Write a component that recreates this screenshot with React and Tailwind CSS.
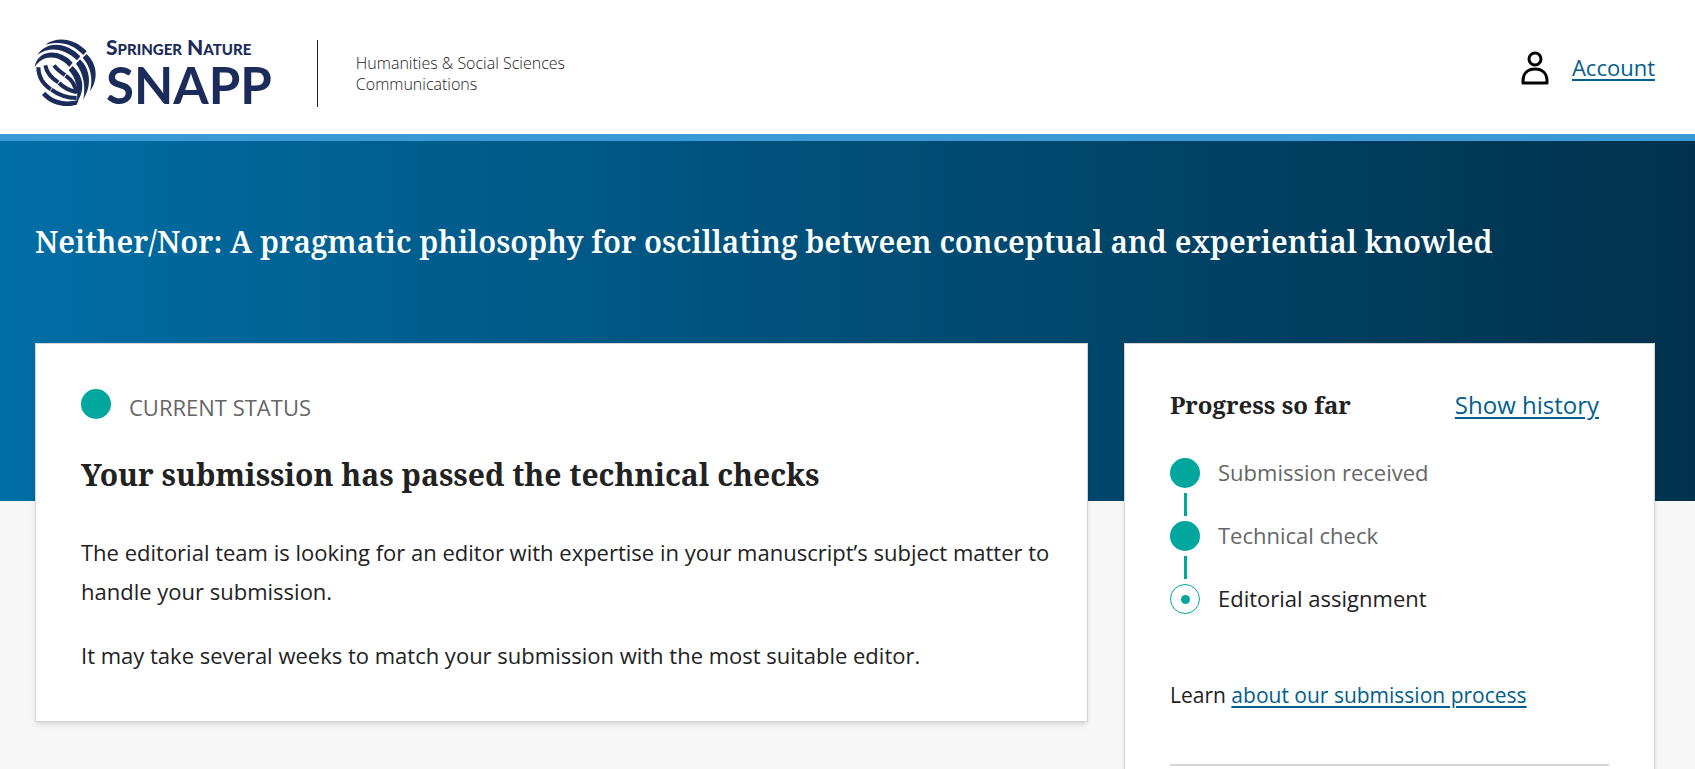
import React from 'react';

const serif = "font-['Noto_Serif','DejaVu_Serif_Condensed',serif]";

const steps = [
  { label: 'Submission received', done: true },
  { label: 'Technical check', done: true },
  { label: 'Editorial assignment', done: false },
];

const Globe = () => (
  <svg viewBox="0 0 216 222" className="h-[74px] w-[72px]" aria-hidden="true">
    <g fill="#1b2c5a">
      {/* upper bands */}
      <path d="M46 26 C84 0 134 8 170 46 L160 57 C128 22 88 14 46 26Z" />
      <path d="M22 56 C54 12 112 20 151 61 L141 73 C108 40 62 28 22 56Z" />
      <path d="M14 94 C22 42 86 34 128 80 L118 93 C86 56 38 54 14 94Z" />
      {/* right bands */}
      <path d="M170 54 C202 84 206 130 180 166 C190 128 182 92 158 65Z" />
      <path d="M150 70 C182 100 186 150 160 190 C168 152 160 112 138 83Z" />
      <path d="M128 90 C160 120 168 160 140 200 C146 160 138 126 116 102Z" />
      {/* outer lower band */}
      <path d="M46 167 C70 194 104 202 146 192 L140 206 C104 217 60 206 36 177Z" />
    </g>
    <g fill="none" stroke="#1b2c5a" strokeWidth="12">
      <path d="M72 88 C82 102 92 108 105 117" />
      <path d="M46 88 C50 112 64 126 85 139" />
      <path d="M25 94 C25 124 38 144 62 160" />
      <path d="M107 119 C126 132 138 150 138 172" />
      <path d="M87 141 C102 156 120 164 140 168" />
      <path d="M64 161 C84 176 108 186 140 186" />
    </g>
  </svg>
);

const Logo = () => (
  <a href="#home" className="flex items-center gap-1 text-[#1b2c5a]">
    <Globe />
    <span className="flex flex-col pt-1 font-['Lato',sans-serif]">
      <span className="text-[21px] leading-5 font-black [font-variant-caps:small-caps]">Springer Nature</span>
      <span className="text-[51px] leading-[56px] font-bold">SNAPP</span>
    </span>
  </a>
);

const Header = () => (
  <header className="flex h-[141px] items-center justify-between border-b-[7px] border-[#3b9ad6] bg-white pr-10 pl-[30px]">
    <div className="flex items-center pt-3">
      <Logo />
      <div className="ml-[45px] flex h-[67px] items-center border-l border-[#222] pt-[2px] pl-[38px]">
        <p className="w-56 text-base leading-[21px] font-light">Humanities &amp; Social Sciences Communications</p>
      </div>
    </div>
    <div className="flex items-center gap-[22px]">
      <svg viewBox="0 0 30 36" className="h-9 w-[30px]" fill="none" stroke="#000" strokeWidth="3" strokeLinejoin="round" aria-hidden="true">
        <circle cx="15" cy="10" r="6" />
        <path d="M3 34 V32 C3 24 8 20 15 20 C22 20 27 24 27 32 V34 Z" />
      </svg>
      <a href="#account" className="text-[22px] text-[#025e8d] underline decoration-2 underline-offset-3">Account</a>
    </div>
  </header>
);

const CurrentStatus = () => (
  <section className="self-start border border-[#d5d5d5] bg-white px-[45px] pt-[45px] pb-[46px] shadow-md">
    <div className="flex gap-[18px]">
      <span className="size-[30px] shrink-0 rounded-full bg-[#01a69c]" />
      <p className="pt-[2px] text-[22px] leading-8 text-[#666]">CURRENT STATUS</p>
    </div>
    <h2 className={`${serif} mt-8 text-[30px] leading-10 font-bold`}>Your submission has passed the technical checks</h2>
    <div className="-mr-3 mt-[38px] text-[22px] leading-[39px]">
      <p>
        The editorial team is looking for an editor with expertise in your manuscript’s subject matter to handle your submission.
      </p>
      <p className="mt-[25px]">It may take several weeks to match your submission with the most suitable editor.</p>
    </div>
  </section>
);

const Progress = () => (
  <section className="border border-[#d5d5d5] bg-white px-[45px] pt-[43px] pb-16 shadow-md">
    <div className="flex items-center justify-between pr-[10px]">
      <h2 className={`${serif} text-2xl leading-9 font-bold`}>Progress so far</h2>
      <a href="#history" className="text-2xl leading-9 text-[#025e8d] underline decoration-2 underline-offset-3">Show history</a>
    </div>
    <ol className="mt-[35px]">
      {steps.map(({ label, done }, i) => (
        <li key={label} className="flex gap-[18px]">
          <div className="flex flex-col items-center">
            {done ? (
              <span className="size-[30px] rounded-full bg-[#01a69c]" />
            ) : (
              <span className="flex size-[30px] items-center justify-center rounded-full border border-[#01a69c]">
                <span className="size-[9px] rounded-full bg-[#01a69c]" />
              </span>
            )}
            {i < steps.length - 1 && <span className="my-[5px] h-[23px] w-[3px] bg-[#01a69c]" />}
          </div>
          <p className={`text-[22px] leading-7 ${done ? 'text-[#666]' : ''}`}>{label}</p>
        </li>
      ))}
    </ol>
    <p className="mt-[65px] text-[21px] leading-8">
      Learn{' '}
      <a href="#process" className="text-[#025e8d] underline decoration-2 underline-offset-3">about our submission process</a>
    </p>
    <hr className="mt-[53px] border-t-2 border-[#d5d5d5]" />
  </section>
);

const App = () => {
  return (
    <div className="h-screen overflow-hidden bg-[#f7f7f7] font-['Open_Sans','Noto_Sans',sans-serif] text-[#222]">
      <Header />
      <div className="h-[360px] bg-linear-to-r from-[#006ea6] to-[#00324d] pt-[78px] pr-10 pl-[35px]">
        <h1 className={`${serif} w-9/10 overflow-hidden text-[30px] leading-[46px] font-semibold whitespace-nowrap text-white`}>
          Neither/Nor: A pragmatic philosophy for oscillating between conceptual and experiential knowledge
        </h1>
      </div>
      <main className="-mt-[158px] grid grid-cols-[1053fr_531fr] gap-9 pr-10 pl-[35px]">
        <CurrentStatus />
        <Progress />
      </main>
    </div>
  );
};

export default App;
